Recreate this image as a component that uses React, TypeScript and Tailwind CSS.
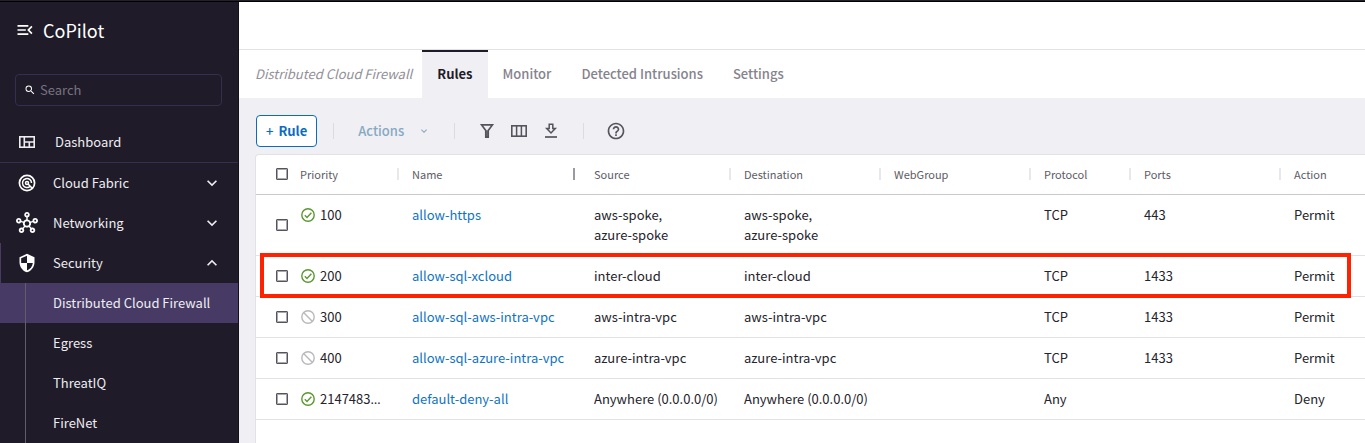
import type { ReactNode } from "react";
import {
  MdHelpOutline,
  MdKeyboardArrowDown,
  MdKeyboardArrowUp,
  MdMenuOpen,
  MdOutlineHub,
  MdSearch,
  MdSecurity,
} from "react-icons/md";

type Rule = {
  enabled: boolean;
  priority: string;
  truncated?: boolean;
  name: string;
  source: string[];
  destination: string[];
  protocol: string;
  ports: string;
  action: string;
  highlighted?: boolean;
};

const rules: Rule[] = [
  { enabled: true, priority: "100", name: "allow-https", source: ["aws-spoke,", "azure-spoke"], destination: ["aws-spoke,", "azure-spoke"], protocol: "TCP", ports: "443", action: "Permit" },
  { enabled: true, priority: "200", name: "allow-sql-xcloud", source: ["inter-cloud"], destination: ["inter-cloud"], protocol: "TCP", ports: "1433", action: "Permit", highlighted: true },
  { enabled: false, priority: "300", name: "allow-sql-aws-intra-vpc", source: ["aws-intra-vpc"], destination: ["aws-intra-vpc"], protocol: "TCP", ports: "1433", action: "Permit" },
  { enabled: false, priority: "400", name: "allow-sql-azure-intra-vpc", source: ["azure-intra-vpc"], destination: ["azure-intra-vpc"], protocol: "TCP", ports: "1433", action: "Permit" },
  { enabled: true, priority: "2147483", truncated: true, name: "default-deny-all", source: ["Anywhere (0.0.0.0/0)"], destination: ["Anywhere (0.0.0.0/0)"], protocol: "Any", ports: "", action: "Deny" },
];

const securityPages = ["Distributed Cloud Firewall", "Egress", "ThreatIQ", "FireNet"];

function DashboardIcon() {
  return (
    <svg viewBox="0 0 16 12" className="h-3 w-4" fill="none" stroke="currentColor" strokeWidth="1.6" aria-hidden="true">
      <rect x="0.8" y="0.8" width="14.4" height="10.4" />
      <path d="M5.3 1v10M5.3 6h9.9M10.3 6v5" />
    </svg>
  );
}

function FabricIcon() {
  return (
    <svg viewBox="0 0 18 18" className="size-[18px]" fill="none" stroke="currentColor" aria-hidden="true">
      <circle cx="9" cy="9" r="7.6" strokeWidth="1.7" />
      <path d="M12.2 12.2A4.5 4.5 0 1 1 13.5 9" strokeWidth="1.5" />
      <circle cx="9" cy="9" r="1.5" strokeWidth="1.6" />
      <path d="M10 10l4.8 4.8" strokeWidth="1.6" />
    </svg>
  );
}

function FilterIcon() {
  return (
    <svg viewBox="0 0 20 20" className="size-5" fill="none" stroke="currentColor" aria-hidden="true">
      <path d="M4.6 3.9h10.8L11.2 9.6v6.6H8.8V9.6z" strokeWidth="1.7" />
      <path d="M10 9.5v7" strokeWidth="1.5" />
    </svg>
  );
}

function ColumnsIcon() {
  return (
    <svg viewBox="0 0 16 12" className="h-3 w-4" fill="none" stroke="currentColor" aria-hidden="true">
      <rect x="0.8" y="0.8" width="14.4" height="10.4" strokeWidth="1.6" />
      <path d="M5.6 1v10M10.4 1v10" strokeWidth="1.5" />
    </svg>
  );
}

function DownloadIcon() {
  return (
    <svg viewBox="0 0 20 20" className="size-5" fill="none" stroke="currentColor" aria-hidden="true">
      <path d="M8.2 3.2h3.6v4.4h2.5L10 12 5.7 7.6h2.5z" strokeWidth="1.5" />
      <path d="M4 16h12" strokeWidth="1.7" />
    </svg>
  );
}

function DisabledIcon() {
  return (
    <svg viewBox="0 0 14 14" className="size-[14px] shrink-0 text-[#b9b9bd]" fill="none" stroke="currentColor" role="img" aria-label="Disabled">
      <circle cx="7" cy="7" r="6.2" strokeWidth="1.4" />
      <path d="M2.8 2.8l8.4 8.4" strokeWidth="1.4" />
    </svg>
  );
}

function EnabledIcon() {
  return (
    <svg viewBox="0 0 14 14" className="size-[14px] shrink-0 text-[#5b9631]" fill="none" stroke="currentColor" role="img" aria-label="Enabled">
      <circle cx="7" cy="7" r="6.2" strokeWidth="1.4" />
      <path d="M3.8 7.2l2.2 2.2 4.4-4.6" strokeWidth="1.4" />
    </svg>
  );
}

function NavGroup({ icon, label, open }: { icon: ReactNode; label: string; open?: boolean }) {
  return (
    <button
      type="button"
      aria-expanded={!!open}
      className={`flex h-10 w-full items-center border-l pr-4 pl-[15px] text-left ${open ? "border-[#473b66]" : "border-transparent"}`}
    >
      <span className="flex w-[22px] justify-center text-white">{icon}</span>
      <span className="ml-[15px] flex-1">{label}</span>
      {open ? <MdKeyboardArrowUp className="size-5" /> : <MdKeyboardArrowDown className="size-5" />}
    </button>
  );
}

function Sidebar() {
  return (
    <aside className="w-[239px] shrink-0 border-r border-[#131019] bg-[#1f1b29] text-[13px] leading-5 text-[#eeedf1]">
      <div className="flex h-14 items-center gap-2 pl-[15px] text-white">
        <button type="button" aria-label="Collapse menu">
          <MdMenuOpen className="size-5" />
        </button>
        <span className="text-lg leading-5">CoPilot</span>
      </div>
      <div className="pt-4 pr-4 pl-[15px]">
        <label className="flex h-8 items-center gap-1 rounded border border-[#352e4e] px-2">
          <MdSearch className="size-3 shrink-0 text-white" />
          <input
            type="search"
            aria-label="Search"
            placeholder="Search"
            className="w-full min-w-0 bg-transparent outline-none placeholder:text-[#77747f]"
          />
        </label>
      </div>
      <nav className="mt-4">
        <a href="#dashboard" className="flex h-[41px] items-center border-b border-[#352e4e] pl-4">
          <span className="flex w-[22px] justify-center">
            <DashboardIcon />
          </span>
          <span className="ml-[17px]">Dashboard</span>
        </a>
        <NavGroup icon={<FabricIcon />} label="Cloud Fabric" />
        <NavGroup icon={<MdOutlineHub className="size-[22px]" />} label="Networking" />
        <NavGroup icon={<MdSecurity className="size-5" />} label="Security" open />
        <ul>
          {securityPages.map((page, i) => (
            <li key={page} className={i === 0 ? "bg-[#473b66] pl-[25px]" : "pl-[25px]"}>
              <a href="#page" className="flex h-10 items-center border-l border-[#615d6d] pl-[27px]">
                {page}
              </a>
            </li>
          ))}
        </ul>
      </nav>
    </aside>
  );
}

function Tabs() {
  return (
    <nav className="flex h-12 items-stretch bg-white text-[13px] leading-5 font-medium text-[#85838d]">
      <span className="flex items-center pr-[10px] pl-4 font-normal whitespace-nowrap text-[#918f97] italic">Distributed Cloud Firewall</span>
      <a href="#rules" aria-current="page" className="flex items-center border-t-2 border-[#1f1b29] bg-[#f0eff4] px-[15px] pb-[2px] font-bold text-[#1f1b29]">
        Rules
      </a>
      {["Monitor", "Detected Intrusions", "Settings"].map((tab) => (
        <a key={tab} href="#tab" className="flex items-center px-[15px] whitespace-nowrap">
          {tab}
        </a>
      ))}
    </nav>
  );
}

function Divider() {
  return <span className="h-4 w-px bg-[#dcdbe1]" />;
}

function Toolbar() {
  return (
    <div className="flex h-14 items-center pt-[10px] pl-[17px] text-[13px] leading-5 font-medium text-[#55535c]">
      <button type="button" className="flex h-8 items-center gap-[5px] rounded border border-[#0b6cbf] bg-white px-[9px] text-[#0b6cbf]">
        <span>+</span>
        <span className="font-bold">Rule</span>
      </button>
      <span className="w-4" />
      <Divider />
      <button type="button" className="ml-6 flex items-center gap-[14px] text-[#86a9c2]">
        Actions
        <MdKeyboardArrowDown className="size-3" />
      </button>
      <span className="w-6" />
      <Divider />
      <div className="ml-[22px] flex items-center gap-3">
        <button type="button" aria-label="Filter">
          <FilterIcon />
        </button>
        <button type="button" aria-label="Columns" className="flex size-5 items-center justify-center">
          <ColumnsIcon />
        </button>
        <button type="button" aria-label="Download">
          <DownloadIcon />
        </button>
      </div>
      <span className="w-[22px]" />
      <Divider />
      <button type="button" aria-label="Help" className="ml-[22px]">
        <MdHelpOutline className="size-5" />
      </button>
    </div>
  );
}

function Tick({ label }: { label: string }) {
  return (
    <input
      type="checkbox"
      aria-label={label}
      className="ml-5 block size-3 appearance-none rounded-[1px] border border-[#55535c] bg-white outline-1 -outline-offset-2 outline-[#a9a8ae] checked:bg-[#0b6cbf]"
    />
  );
}

function HeaderCell({ children, first, wide }: { children: string; first?: boolean; wide?: boolean }) {
  return (
    <th scope="col" className="p-0 text-left font-normal">
      <div className="flex items-center">
        {first ? <span className="w-[2px]" /> : <span className="h-3 w-[2px] bg-[#e8e7eb]" />}
        <span className="ml-[13px] flex-1">{children}</span>
        {wide && <span className="mr-1 h-3 w-[2px] bg-[#9b99a2]" />}
      </div>
    </th>
  );
}

function Lines({ values }: { values: string[] }) {
  return (
    <td className="py-[10px] pl-[15px] whitespace-nowrap">
      {values.map((value) => (
        <div key={value}>{value}</div>
      ))}
    </td>
  );
}

function RulesTable() {
  return (
    <div className="ml-4 flex-1 overflow-hidden rounded-tl border-t border-l border-[#e2e1e6] bg-white">
      <table className="w-full min-w-[1100px] table-fixed border-collapse text-[13px] leading-5 text-[#25232b]">
        <colgroup>
          <col className="w-[29px]" />
          <col className="w-[112px]" />
          <col className="w-[182px]" />
          <col className="w-[150px]" />
          <col className="w-[150px]" />
          <col className="w-[150px]" />
          <col className="w-[100px]" />
          <col className="w-[150px]" />
          <col />
        </colgroup>
        <thead>
          <tr className="h-[39px] border-b border-[#c9c7d3] text-[11px] leading-4 text-[#5d5b65]">
            <th className="p-0">
              <Tick label="Select all rules" />
            </th>
            <HeaderCell first>Priority</HeaderCell>
            <HeaderCell wide>Name</HeaderCell>
            <HeaderCell first>Source</HeaderCell>
            <HeaderCell>Destination</HeaderCell>
            <HeaderCell>WebGroup</HeaderCell>
            <HeaderCell>Protocol</HeaderCell>
            <HeaderCell>Ports</HeaderCell>
            <HeaderCell>Action</HeaderCell>
          </tr>
        </thead>
        <tbody>
          {rules.map((rule) => (
            <tr key={rule.name} className="relative border-b border-[#e2e1e6] align-top">
              <td className="p-0 align-middle">
                <Tick label={`Select ${rule.name}`} />
                {rule.highlighted && (
                  <span className="pointer-events-none absolute -top-[2px] right-[14px] -bottom-[3px] left-1 border-4 border-[#ff2200]" />
                )}
              </td>
              <td className="py-[10px] pl-4">
                <div className="flex items-center gap-[5px]">
                  {rule.enabled ? <EnabledIcon /> : <DisabledIcon />}
                  <span>
                    {rule.priority}
                    {rule.truncated && <span className="font-['Open_Sans',sans-serif]">…</span>}
                  </span>
                </div>
              </td>
              <td className="py-[10px] pl-[15px] whitespace-nowrap">
                <a href="#rule" className="text-[#0f73c5]">
                  {rule.name}
                </a>
              </td>
              <Lines values={rule.source} />
              <Lines values={rule.destination} />
              <td />
              <Lines values={[rule.protocol]} />
              <Lines values={[rule.ports]} />
              <Lines values={[rule.action]} />
            </tr>
          ))}
        </tbody>
      </table>
    </div>
  );
}

export default function App() {
  return (
    <div className="flex h-screen flex-col overflow-hidden font-['Noto_Sans_CJK_SC',sans-serif]">
      <div className="h-[2px] shrink-0 border-b border-black bg-[#24212d]" />
      <div className="flex min-h-0 flex-1">
        <Sidebar />
        <main className="flex min-w-0 flex-1 flex-col bg-[#f0eff4]">
          <header className="h-12 shrink-0 border-b border-[#e2e1e6] bg-white" />
          <Tabs />
          <Toolbar />
          <RulesTable />
        </main>
      </div>
    </div>
  );
}
